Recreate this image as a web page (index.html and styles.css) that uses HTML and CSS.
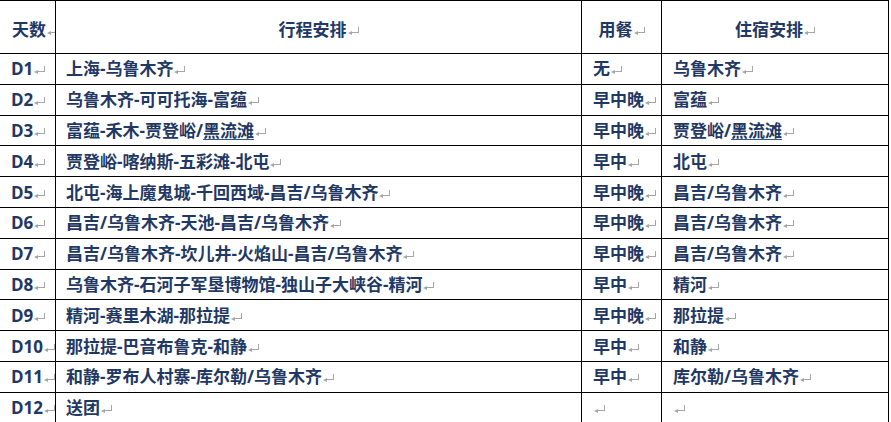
FILE: index.html
```html
<!DOCTYPE html>
<html lang="zh">
<head>
<meta charset="utf-8">
<link rel="stylesheet" href="styles.css">
</head>
<body>
<table class="plan">
  <colgroup>
    <col class="c-day"><col class="c-route"><col class="c-meal"><col class="c-stay">
  </colgroup>
  <thead>
    <tr>
      <th class="day-h">天数<span class="pm"></span></th>
      <th>行程安排<span class="pm"></span></th>
      <th>用餐<span class="pm"></span></th>
      <th>住宿安排<span class="pm"></span></th>
    </tr>
  </thead>
  <tbody>
    <tr><td>D1<span class="pm"></span></td><td>上海-乌鲁木齐<span class="pm"></span></td><td>无<span class="pm"></span></td><td>乌鲁木齐<span class="pm"></span></td></tr>
    <tr><td>D2<span class="pm"></span></td><td>乌鲁木齐-可可托海-富蕴<span class="pm"></span></td><td>早中晚<span class="pm"></span></td><td>富蕴<span class="pm"></span></td></tr>
    <tr><td>D3<span class="pm"></span></td><td>富蕴-禾木-贾登峪/<span class="ul">黑流滩</span><span class="pm"></span></td><td>早中晚<span class="pm"></span></td><td>贾登峪/<span class="ul">黑流滩</span><span class="pm"></span></td></tr>
    <tr><td>D4<span class="pm"></span></td><td>贾登峪-喀纳斯-五彩滩-北屯<span class="pm"></span></td><td>早中<span class="pm"></span></td><td>北屯<span class="pm"></span></td></tr>
    <tr><td>D5<span class="pm"></span></td><td>北屯-海上魔鬼城-千回西域-昌吉/乌鲁木齐<span class="pm"></span></td><td>早中晚<span class="pm"></span></td><td>昌吉/乌鲁木齐<span class="pm"></span></td></tr>
    <tr><td>D6<span class="pm"></span></td><td>昌吉/乌鲁木齐-天池-昌吉/乌鲁木齐<span class="pm"></span></td><td>早中晚<span class="pm"></span></td><td>昌吉/乌鲁木齐<span class="pm"></span></td></tr>
    <tr><td>D7<span class="pm"></span></td><td>昌吉/乌鲁木齐-坎儿井-火焰山-昌吉/乌鲁木齐<span class="pm"></span></td><td>早中晚<span class="pm"></span></td><td>昌吉/乌鲁木齐<span class="pm"></span></td></tr>
    <tr><td>D8<span class="pm"></span></td><td>乌鲁木齐-石河子军垦博物馆-独山子大峡谷-精河<span class="pm"></span></td><td>早中<span class="pm"></span></td><td>精河<span class="pm"></span></td></tr>
    <tr><td>D9<span class="pm"></span></td><td>精河-赛里木湖-那拉提<span class="pm"></span></td><td>早中晚<span class="pm"></span></td><td>那拉提<span class="pm"></span></td></tr>
    <tr><td>D10<span class="pm"></span></td><td>那拉提-巴音布鲁克-和静<span class="pm"></span></td><td>早中<span class="pm"></span></td><td>和静<span class="pm"></span></td></tr>
    <tr><td>D11<span class="pm"></span></td><td>和静-罗布人村寨-库尔勒/乌鲁木齐<span class="pm"></span></td><td>早中<span class="pm"></span></td><td>库尔勒/乌鲁木齐<span class="pm"></span></td></tr>
    <tr><td>D12<span class="pm"></span></td><td>送团<span class="pm"></span></td><td><span class="pm"></span></td><td><span class="pm"></span></td></tr>
  </tbody>
</table>
</body>
</html>
```

FILE: styles.css
```css
html, body {
  margin: 0;
  padding: 0;
  background: #ffffff;
}

.plan {
  border-collapse: collapse;
  table-layout: fixed;
  width: 889px;
  margin-left: -1px;
  font-family: "Open Sans", "Noto Sans CJK SC", sans-serif;
  font-weight: 700;
  font-size: 17px;
  color: #1f3864;
}

.c-day { width: 56px; }
.c-route { width: 526px; }
.c-meal { width: 80px; }
.c-stay { width: 227px; }

.plan th,
.plan td {
  border: 1px solid #000;
  white-space: nowrap;
  overflow: hidden;
  line-height: 20px;
  box-sizing: border-box;
}

.plan th {
  height: 53px;
  text-align: center;
  padding: 6px 0 0 0;
}

.plan th.day-h {
  text-align: left;
  padding-left: 12px;
}

.plan td {
  height: 30.8px;
  padding: 1px 0 0 11px;
}

.plan td:nth-child(2) {
  padding-left: 10px;
}

.pm {
  display: inline-block;
  position: relative;
  width: 7px;
  height: 5px;
  margin-left: 4px;
  border-right: 1px solid #a6a6a6;
  border-bottom: 1px solid #a6a6a6;
  vertical-align: 3px;
}

.pm::before {
  content: "";
  position: absolute;
  left: -3px;
  bottom: -3px;
  width: 0;
  height: 0;
  border-top: 2.5px solid transparent;
  border-bottom: 2.5px solid transparent;
  border-right: 4px solid #a6a6a6;
}

.ul {
  text-decoration: underline;
  text-decoration-color: #2f5597;
  text-underline-offset: 2px;
  text-decoration-thickness: 1px;
}
```
